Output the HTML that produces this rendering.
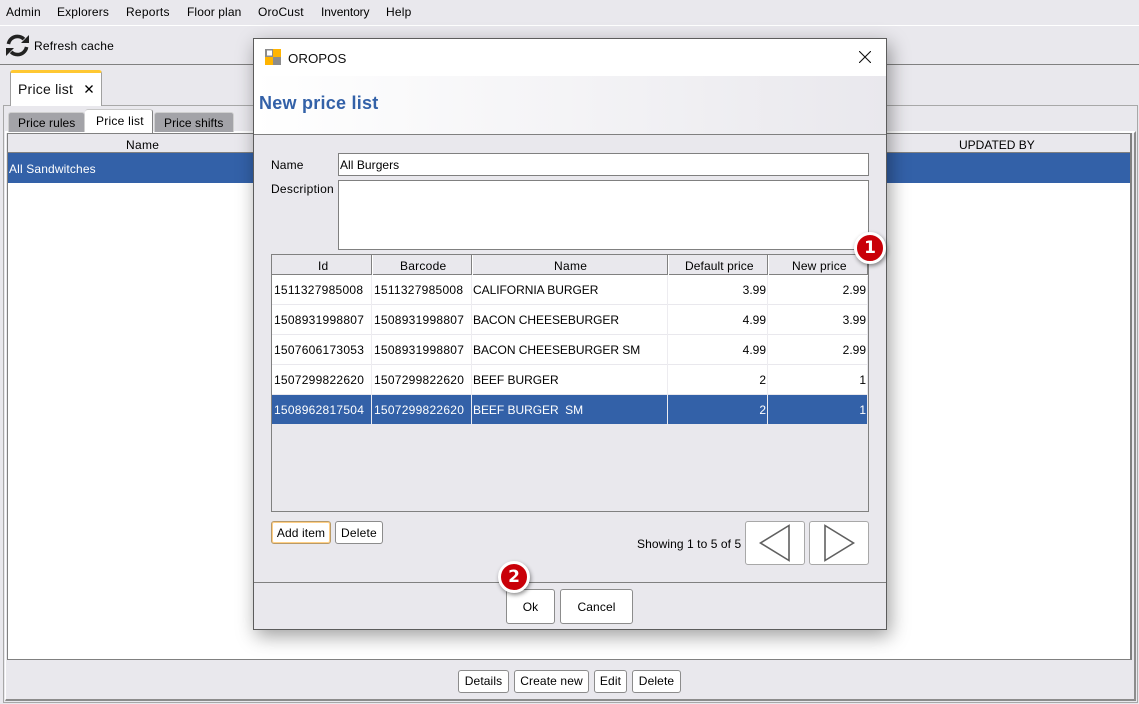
<!DOCTYPE html>
<html><head><meta charset="utf-8"><style>
html,body{margin:0;padding:0}
body{width:1139px;height:704px;position:relative;overflow:hidden;background:#E9E8ED;font:12px/14px "Liberation Sans",Arial,sans-serif;color:#000;letter-spacing:.12px}
.a{position:absolute;box-sizing:border-box}
.t{position:absolute;white-space:nowrap}
.b{position:absolute;box-sizing:border-box;background:#fff;border:1px solid #8c8c8c;border-radius:3px;text-align:center;white-space:nowrap}
.v{position:absolute;width:1px;background:#EDECF0;top:20px;height:150px}
.hv{position:absolute;top:0;width:2px;height:20px;background:linear-gradient(90deg,#808080 50%,#fff 50%)}
.r{position:absolute;left:0;width:595px;height:29px;background:#fff}
.c{position:absolute;top:8px;white-space:nowrap;letter-spacing:0}
.d{letter-spacing:.26px}
.u{letter-spacing:-.04px}
.badge{position:absolute;box-sizing:border-box;width:32px;height:32px;border-radius:50%;background:#C90008;border:3px solid #fff;box-shadow:1px 2px 4px rgba(0,0,0,.45);color:#fff;font:bold 17px/27px "DejaVu Sans",sans-serif;letter-spacing:0;text-align:center}
</style></head><body>
<!-- menu -->
<div class="t" style="left:6px;top:5px;letter-spacing:.15px">Admin</div>
<div class="t" style="left:57px;top:5px;letter-spacing:.15px">Explorers</div>
<div class="t" style="left:126px;top:5px;letter-spacing:.25px">Reports</div>
<div class="t" style="left:187px;top:5px;letter-spacing:.1px">Floor plan</div>
<div class="t" style="left:258px;top:5px;letter-spacing:.15px">OroCust</div>
<div class="t" style="left:321px;top:5px;letter-spacing:-.1px">Inventory</div>
<div class="t" style="left:386px;top:5px;letter-spacing:.2px">Help</div>
<div class="a" style="left:0;top:25px;width:1139px;height:1px;background:#fff"></div>
<!-- toolbar -->
<svg class="a" style="left:5px;top:33px" width="25" height="25" viewBox="0 0 25 25">
<path d="M3.400 11C4.300 6.500 8 3.400 12.500 3.400c2.500 0 4.800 1 6.400 2.700" fill="none" stroke="#222" stroke-width="3.600"/>
<path d="M16 10h8V2z" fill="#222"/>
<path d="M21.600 14C20.700 18.500 17 21.600 12.500 21.600c-2.500 0-4.800-1-6.400-2.700" fill="none" stroke="#222" stroke-width="3.600"/>
<path d="M9 15H1v8z" fill="#222"/>
</svg>
<div class="t" style="left:34px;top:39px;letter-spacing:.2px">Refresh cache</div>
<div class="a" style="left:0;top:64px;width:1139px;height:1px;background:#808080"></div>
<!-- outer panel -->
<div class="a" style="left:3px;top:105px;width:1135px;height:598px;border:1px solid #a8a8a8;background:#E9E8ED"></div>
<div class="a" style="left:5px;top:131px;width:1131px;height:570px;border:2px solid #fff;border-right:2px solid #8c8c8c;border-bottom:2px solid #8c8c8c;border-left:1px solid #fff"></div>
<!-- main tab -->
<div class="a" style="left:10px;top:70px;width:92px;height:36px;background:#fff;border:1px solid #a0a0a0;border-bottom:0;border-top:3px solid #FFC832;border-radius:3px 3px 0 0"></div>
<div class="t" style="left:18px;top:81px;font-size:14px;line-height:17px;color:#111;letter-spacing:.22px">Price list</div>
<svg class="a" style="left:85px;top:85px" width="8" height="8" viewBox="0 0 8 8"><path d="M.5.500l7 7M7.500.500l-7 7" stroke="#000" stroke-width="1.300"/></svg>
<!-- sub tabs -->
<div class="a" style="left:8px;top:112px;width:77px;height:20px;background:#A3A3A8;border:1px solid #d0d0d0;border-bottom:0;border-radius:3px 3px 0 0"></div>
<div class="t" style="left:18px;top:116px;letter-spacing:.06px">Price rules</div>
<div class="a" style="left:85px;top:109px;width:68px;height:24px;background:#fff;border-top:1px solid #c8c8c8;border-right:1px solid #808080;border-radius:3px 3px 0 0"></div>
<div class="t" style="left:96px;top:114px;letter-spacing:.25px">Price list</div>
<div class="a" style="left:154px;top:112px;width:80px;height:20px;background:#A3A3A8;border:1px solid #d0d0d0;border-bottom:0;border-radius:3px 3px 0 0"></div>
<div class="t" style="left:164px;top:116px;letter-spacing:.06px">Price shifts</div>
<!-- main table -->
<div class="a" style="left:7px;top:133px;width:1125px;height:527px;background:#fff;border:1px solid #808080;border-right:2px solid #808080"></div>
<div class="a" style="left:8px;top:134px;width:1122px;height:19px;background:#E9E8ED;border-bottom:1px solid #808080"></div>
<div class="t" style="left:126px;top:138px;letter-spacing:.3px">Name</div>
<div class="t" style="left:959px;top:138px;letter-spacing:0">UPDATED BY</div>
<div class="a" style="left:8px;top:153px;width:1122px;height:30px;background:#3361A8"></div>
<div class="t" style="left:9px;top:162px;color:#fff;letter-spacing:.14px">All Sandwitches</div>
<!-- bottom buttons -->
<div class="b" style="left:458px;top:670px;width:51px;height:23px;line-height:21px">Details</div>
<div class="b" style="left:514px;top:670px;width:75px;height:23px;line-height:21px">Create new</div>
<div class="b" style="left:594px;top:670px;width:33px;height:23px;line-height:21px">Edit</div>
<div class="b" style="left:632px;top:670px;width:49px;height:23px;line-height:21px">Delete</div>
<!-- modal -->
<div class="a" style="left:253px;top:38px;width:634px;height:592px;background:#E9E8ED;border:1px solid #5c5c5c;box-shadow:3px 6px 18px rgba(0,0,0,.38)">
 <div class="a" style="left:0;top:0;width:632px;height:37px;background:#fff"></div>
 <div class="a" style="left:0;top:37px;width:632px;height:59px;background:linear-gradient(90deg,#fff 0%,#E9E8ED 100%);border-bottom:1px solid #808080"></div>
</div>
<svg class="a" style="left:265px;top:49px" width="16" height="16" viewBox="0 0 16 16">
<rect x="0" y="0" width="8" height="8" fill="#8c8c8c"/><rect x="2" y="1.500" width="5" height="5" fill="#fff"/>
<rect x="8" y="0" width="8" height="8" fill="#FFB400"/>
<rect x="0" y="8" width="8" height="8" fill="#FFB400"/>
<rect x="8" y="8" width="8" height="8" fill="#8c8c8c"/></svg>
<div class="t" style="left:288px;top:50px;font-size:13.300px;line-height:17px;color:#111;letter-spacing:0">OROPOS</div>
<svg class="a" style="left:859px;top:51px" width="12" height="12" viewBox="0 0 12 12"><path d="M0 0l12 12M12 0L0 12" stroke="#111" stroke-width="1.100" fill="none"/></svg>
<div class="t" style="left:259px;top:92px;font:bold 18px/22px 'Liberation Sans',sans-serif;color:#3361A8;letter-spacing:.25px">New price list</div>
<!-- form -->
<div class="t" style="left:271px;top:158px">Name</div>
<div class="a" style="left:338px;top:153px;width:531px;height:23px;background:#fff;border:1px solid #808080"></div>
<div class="t" style="left:340px;top:158px;letter-spacing:.05px">All Burgers</div>
<div class="t" style="left:271px;top:182px;letter-spacing:.27px">Description</div>
<div class="a" style="left:338px;top:180px;width:531px;height:70px;background:#fff;border:1px solid #808080"></div>
<!-- modal table -->
<div class="a" style="left:271px;top:254px;width:598px;height:258px;border:1px solid #808080;background:#E9E8ED">
 <div class="a" style="left:0;top:19px;width:596px;height:1px;background:#808080"></div>
 <div class="a" style="left:0;top:20px;width:596px;height:1px;background:#fff"></div>
 <div class="hv" style="left:99px"></div><div class="hv" style="left:199px"></div><div class="hv" style="left:395px"></div><div class="hv" style="left:495px"></div>
 <div class="a" style="left:595px;top:0;width:1px;height:20px;background:#808080"></div>
 <div class="t" style="left:46px;top:4px">Id</div>
 <div class="t" style="left:128px;top:4px;letter-spacing:.25px">Barcode</div>
 <div class="t" style="left:282px;top:4px;letter-spacing:.3px">Name</div>
 <div class="t" style="left:413px;top:4px;letter-spacing:.1px">Default price</div>
 <div class="t" style="left:520px;top:4px;letter-spacing:.15px">New price</div>

 <div class="r" style="top:20px"><div class="c d" style="left:2px">1511327985008</div><div class="c d" style="left:102px">1511327985008</div><div class="c u" style="left:201px">CALIFORNIA BURGER</div><div class="c" style="right:101px">3.99</div><div class="c" style="right:1px">2.99</div></div>
 <div class="r" style="top:50px"><div class="c d" style="left:2px">1508931998807</div><div class="c d" style="left:102px">1508931998807</div><div class="c u" style="left:201px">BACON CHEESEBURGER</div><div class="c" style="right:101px">4.99</div><div class="c" style="right:1px">3.99</div></div>
 <div class="r" style="top:80px"><div class="c d" style="left:2px">1507606173053</div><div class="c d" style="left:102px">1508931998807</div><div class="c u" style="left:201px">BACON CHEESEBURGER SM</div><div class="c" style="right:101px">4.99</div><div class="c" style="right:1px">2.99</div></div>
 <div class="r" style="top:110px"><div class="c d" style="left:2px">1507299822620</div><div class="c d" style="left:102px">1507299822620</div><div class="c u" style="left:201px">BEEF BURGER</div><div class="c" style="right:101px">2</div><div class="c" style="right:1px">1</div></div>
 <div class="r" style="top:140px;background:#3361A8;color:#fff"><div class="c d" style="left:2px">1508962817504</div><div class="c d" style="left:102px">1507299822620</div><div class="c u" style="left:201px">BEEF BURGER&nbsp; SM</div><div class="c" style="right:101px">2</div><div class="c" style="right:1px">1</div></div>
 <div class="a" style="left:0;top:49px;width:595px;height:1px;background:#E9E8ED"></div>
 <div class="a" style="left:0;top:79px;width:595px;height:1px;background:#E9E8ED"></div>
 <div class="a" style="left:0;top:109px;width:595px;height:1px;background:#E9E8ED"></div>
 <div class="a" style="left:0;top:139px;width:595px;height:1px;background:#E9E8ED"></div>
 <div class="v" style="left:99px"></div>
 <div class="v" style="left:199px"></div>
 <div class="v" style="left:395px"></div>
 <div class="v" style="left:495px"></div>
</div>
<!-- table buttons -->
<div class="b" style="left:271px;top:521px;width:60px;height:23px;line-height:23px;border:1px solid #b89a68;box-shadow:inset 0 0 0 1px #FFCF85">Add item</div>
<div class="b" style="left:335px;top:521px;width:48px;height:23px;line-height:23px;letter-spacing:.2px">Delete</div>
<div class="t" style="left:637px;top:537px;letter-spacing:.08px">Showing 1 to 5 of 5</div>
<div class="b" style="left:745px;top:521px;width:60px;height:44px;border-color:#a8a8a8"></div>
<div class="b" style="left:809px;top:521px;width:60px;height:44px;border-color:#a8a8a8"></div>
<svg class="a" style="left:745px;top:521px" width="124" height="44" viewBox="0 0 124 44" fill="none" stroke="#606060" stroke-width="1.600">
<path d="M44 4.500 L15.500 22 L44 39.500 Z"/><path d="M80 4.500 L108.500 22 L80 39.500 Z"/></svg>
<!-- footer -->
<div class="a" style="left:254px;top:582px;width:632px;height:1px;background:#808080"></div>
<div class="b" style="left:506px;top:589px;width:49px;height:35px;line-height:35px">Ok</div>
<div class="b" style="left:560px;top:589px;width:73px;height:35px;line-height:35px">Cancel</div>
<!-- badges -->
<div class="badge" style="left:854px;top:232px">1</div>
<div class="badge" style="left:498px;top:561px">2</div>
</body></html>
